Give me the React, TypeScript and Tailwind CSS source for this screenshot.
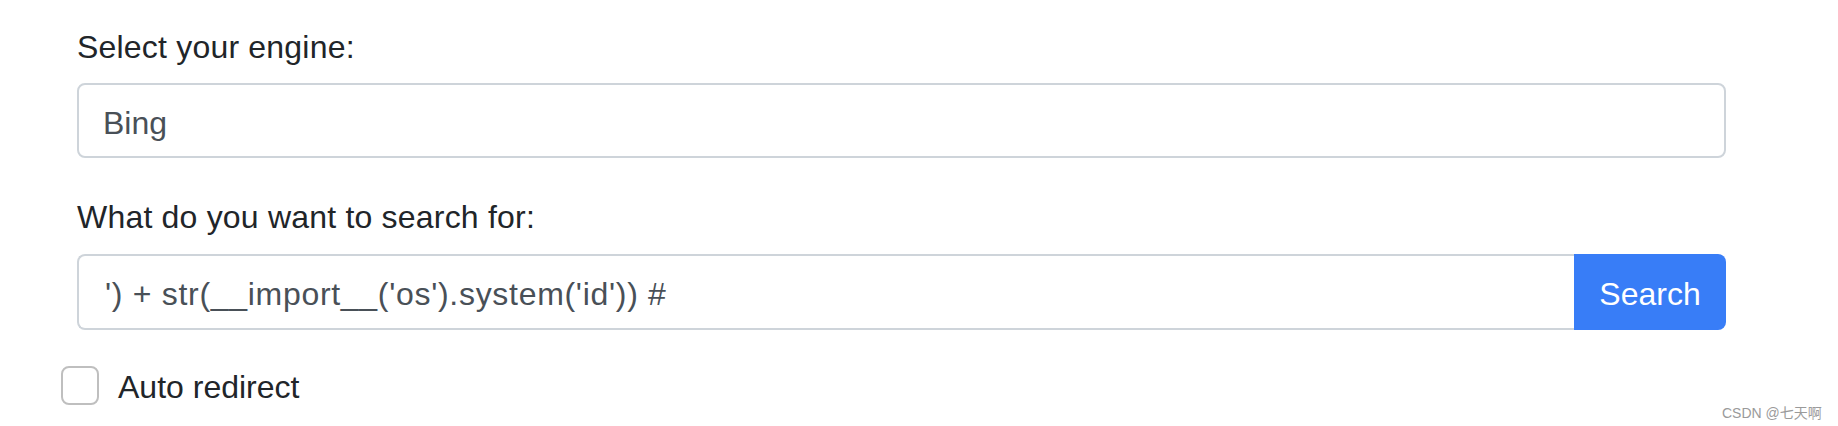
import React from "react";

export default function App() {
  const font = { fontFamily: '"Liberation Sans", Arial, Helvetica, sans-serif' };
  return (
    <div className="relative w-[1838px] h-[426px] bg-white overflow-hidden" style={font}>
      <div className="pl-[77px] pr-[112px] pt-[20px] text-[32px] leading-[48px] text-[#212529]">
        <div className="mb-[32px]">
          <div className="pt-[3px] mb-[12px] tracking-[0.2px]">Select your engine:</div>
          <div className="h-[75px] border-2 border-[#ced4da] rounded-[8px] px-[24px] pt-[4px] flex items-center text-[#495057]">
            Bing
          </div>
        </div>
        <div className="mb-[30px]">
          <div className="pt-[3px] mb-[13px] tracking-[0.2px]">What do you want to search for:</div>
          <div className="flex h-[76px]">
            <div className="flex-1 border-2 border-r-0 border-[#ced4da] rounded-l-[8px] pl-[26px] pr-[24px] pt-[4px] flex items-center text-[#495057] tracking-[0.7px]">
              {"') + str(__import__('os').system('id')) #"}
            </div>
            <button className="w-[152px] bg-[#387df7] text-white rounded-r-[8px] pt-[3px] flex items-center justify-center">
              Search
            </button>
          </div>
        </div>
        <div className="flex items-center -ml-[16px]">
          <div className="w-[38px] h-[39px] border-2 border-[#bfbfbf] rounded-[8px] mr-[19px]"></div>
          <span className="pt-[3px]">Auto redirect</span>
        </div>
      </div>
      <div
        className="absolute left-[1722px] top-[404px] text-[14px] leading-[18px] text-[#9a9a9a] whitespace-nowrap"
        style={{ fontFamily: '"Liberation Sans", Arial, "Noto Sans CJK SC", sans-serif' }}
      >
        CSDN @七天啊
      </div>
    </div>
  );
}
